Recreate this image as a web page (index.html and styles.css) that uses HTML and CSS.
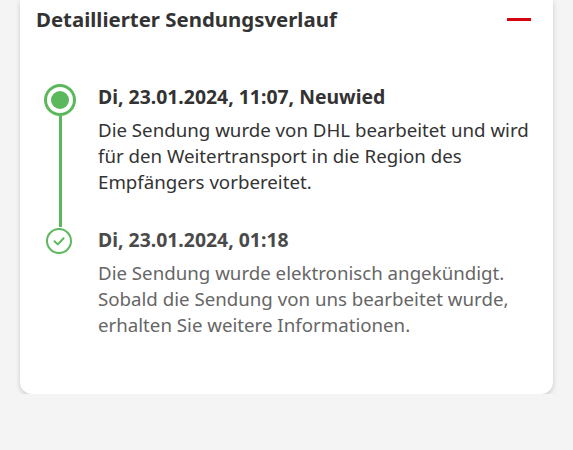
FILE: index.html
```html
<!DOCTYPE html>
<html lang="de">
<head>
    <meta charset="UTF-8">
    <title>Sendungsverlauf</title>
    <link rel="stylesheet" href="styles.css">
</head>
<body>

    <div class="card">
        <div class="card-header">
            <h2>Detaillierter Sendungsverlauf</h2>
            <span class="collapse"></span>
        </div>

        <ul class="timeline">
            <li class="event current">
                <div class="marker">
                    <span class="dot"></span>
                    <span class="line"></span>
                </div>
                <div class="event-body">
                    <h3>Di, 23.01.2024, 11:07, Neuwied</h3>
                    <p>Die Sendung wurde von DHL bearbeitet und wird für den Weitertransport in die Region des Empfängers vorbereitet.</p>
                </div>
            </li>
            <li class="event done">
                <div class="marker">
                    <span class="check">
                        <svg width="26" height="26" viewBox="0 0 26 26">
                            <circle cx="13" cy="13" r="12" fill="none" stroke="#5cb85c" stroke-width="2"/>
                            <path d="M8.5 13.2 L11.8 16.4 L17.6 10.2" fill="none" stroke="#5cb85c" stroke-width="2" stroke-linecap="round" stroke-linejoin="round"/>
                        </svg>
                    </span>
                </div>
                <div class="event-body">
                    <h3>Di, 23.01.2024, 01:18</h3>
                    <p>Die Sendung wurde elektronisch angekündigt. Sobald die Sendung von uns bearbeitet wurde, erhalten Sie weitere Informationen.</p>
                </div>
            </li>
        </ul>
    </div>

</body>
</html>
```

FILE: styles.css
```css
body {
    font-family: 'Noto Sans', sans-serif;
    background-color: #f4f4f4;
    margin: 0;
    color: #333;
}

.card {
    margin: 0 20px;
    background: #ffffff;
    border-radius: 0 0 12px 12px;
    box-shadow: 0 2px 5px rgba(0, 0, 0, 0.18);
    padding: 6px 20px 56px 16px;
}

.card-header {
    display: flex;
    justify-content: space-between;
    align-items: center;
}

h2 {
    margin: 0;
    font-size: 20.4px;
    line-height: 26px;
    font-weight: 700;
    color: #333;
}

.collapse {
    width: 24px;
    height: 3px;
    background-color: #d40511;
    margin-right: 2px;
}

.timeline {
    list-style: none;
    margin: 52px 0 0;
    padding: 0;
}

.event {
    display: grid;
    grid-template-columns: 48px 1fr;
    column-gap: 14px;
}

.marker {
    display: flex;
    flex-direction: column;
    align-items: center;
}

.dot {
    width: 32px;
    height: 32px;
    box-sizing: border-box;
    border: 3px solid #5cb85c;
    border-radius: 50%;
    display: flex;
    align-items: center;
    justify-content: center;
}

.dot::after {
    content: '';
    width: 18px;
    height: 18px;
    border-radius: 50%;
    background-color: #5cb85c;
}

.line {
    flex: 1;
    width: 3px;
    background-color: #5cb85c;
}

.check svg {
    display: block;
    margin: 1px 2px 0 0;
}

.event-body {
    padding-bottom: 32px;
}

.event.done .event-body {
    padding-bottom: 0;
}

h3 {
    margin: 0;
    font-size: 19.4px;
    line-height: 26px;
    font-weight: 700;
}

p {
    margin: 7px 0 0;
    font-size: 18.7px;
    line-height: 26px;
}

.event.done h3 {
    color: #4a4a4a;
}

.event.done p {
    color: #666;
}
```
